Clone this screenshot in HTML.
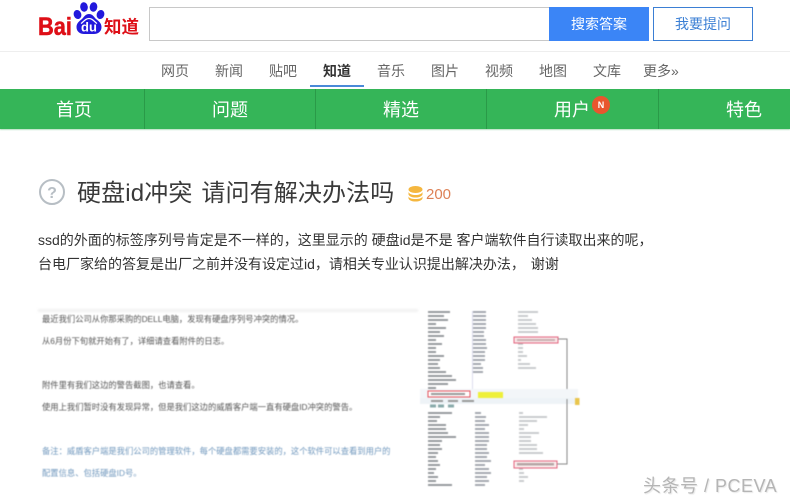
<!DOCTYPE html>
<html lang="zh"><head><meta charset="utf-8"><style>
html,body{margin:0;padding:0;background:#fff}
#p{position:relative;width:790px;height:503px;overflow:hidden;background:#fff;font-family:"Liberation Sans","Noto Sans CJK SC",sans-serif;color:#333}
#p div{position:absolute;white-space:nowrap}
.nav{top:61px;font-size:14px;line-height:20px;color:#666}
.g{top:97px;font-size:18px;line-height:26px;color:#fff;transform:translateX(-50%)}
.d{top:89px;width:1px;height:40px;background:#2a9a48}
.t{left:42px;font-size:8.3px;line-height:12px;color:#555;filter:blur(.5px)}
</style></head><body><div id="p">
<svg style="position:absolute;left:36px;top:12px" width="40" height="26"><text x="2" y="23" font-family="Liberation Sans" font-weight="700" font-size="25" textLength="34" lengthAdjust="spacingAndGlyphs" fill="#de0f17" stroke="#de0f17" stroke-width=".5">Bai</text></svg>
<svg style="position:absolute;left:72px;top:2px" width="34" height="34" viewBox="0 0 34 34">
<ellipse cx="12" cy="5" rx="3.800" ry="4.800" fill="#2319dc" transform="rotate(-8 12 5)"/>
<ellipse cx="21.500" cy="5" rx="3.800" ry="4.800" fill="#2319dc" transform="rotate(8 21.500 5)"/>
<ellipse cx="5.500" cy="12.500" rx="3.800" ry="4.600" fill="#2319dc" transform="rotate(-20 5.500 12.500)"/>
<ellipse cx="28.500" cy="12.500" rx="3.800" ry="4.600" fill="#2319dc" transform="rotate(20 28.500 12.500)"/>
<path d="M17 12c-3.500 0-5 3-7 5-2.500 2-5.500 4-5.500 8 0 5 4 7 7.500 7h10c3.500 0 7.500-2 7.500-7 0-4-3-6-5.500-8-2-2-3.500-5-7-5z" fill="#2319dc"/>
<path d="M9 21.500c2.500-1.500 4-5 8-5s5.500 3.500 8 5" fill="none" stroke="#fff" stroke-width="1.300"/>
<text x="17" y="29.500" text-anchor="middle" font-family="Liberation Sans" font-weight="700" font-size="13" fill="#fff">du</text></svg>
<div style="left:104px;top:16px;font:700 17.500px/22px 'Noto Sans CJK SC',sans-serif;color:#de0f17">知道</div>
<div style="left:149px;top:7px;width:400px;height:32px;border:1px solid #c8c8c8;border-right:0"></div>
<div style="left:549px;top:7px;width:100px;height:34px;background:#3b85f6;color:#fff;font-size:14px;line-height:34px;text-align:center">搜索答案</div>
<div style="left:653px;top:7px;width:98px;height:32px;border:1px solid #3b7fd4;color:#3b7fd4;font-size:14px;line-height:32px;text-align:center">我要提问</div>
<div style="left:0;top:51px;width:790px;height:1px;background:#eee"></div>
<div class="nav" style="left:161px">网页</div><div class="nav" style="left:215px">新闻</div><div class="nav" style="left:269px">贴吧</div>
<div class="nav" style="left:323px;color:#333;font-weight:700">知道</div><div class="nav" style="left:377px">音乐</div><div class="nav" style="left:431px">图片</div>
<div class="nav" style="left:485px">视频</div><div class="nav" style="left:539px">地图</div><div class="nav" style="left:593px">文库</div><div class="nav" style="left:643px">更多»</div>
<div style="left:310px;top:85px;width:54px;height:2px;background:#4a8ad8"></div>
<div style="left:0;top:89px;width:790px;height:40px;background:#35b558;box-shadow:0 1px 1px #b8e0c4"></div>
<div class="d" style="left:144px"></div><div class="d" style="left:315px"></div><div class="d" style="left:486px"></div><div class="d" style="left:658px"></div>
<div class="g" style="left:74px">首页</div><div class="g" style="left:230px">问题</div><div class="g" style="left:401px">精选</div><div class="g" style="left:572px">用户</div><div class="g" style="left:744px">特色</div>
<div style="left:592px;top:96px;width:18px;height:18px;border-radius:9px;background:#e8562e;color:#fff;font:700 9px/18px 'Liberation Sans',sans-serif;text-align:center">N</div>
<svg style="position:absolute;left:38px;top:178px" width="28" height="28"><circle cx="14" cy="14" r="12" fill="none" stroke="#b7bec4" stroke-width="2"/><text x="14" y="20" text-anchor="middle" font-family="Liberation Sans" font-weight="700" font-size="16" fill="#b7bec4">?</text></svg>
<div style="left:77px;top:177px;font-size:24px;line-height:34px;color:#3a3a3a;letter-spacing:.14px;word-spacing:2px">硬盘id冲突 请问有解决办法吗</div>
<svg style="position:absolute;left:408px;top:186px" width="16" height="16"><ellipse cx="7.500" cy="3.500" rx="7" ry="3.500" fill="#f5b73f"/><path d="M.5 6c1 2 3.500 3 7 3s6-1 7-3v2.500c-1 2-3.500 3-7 3s-6-1-7-3z" fill="#f5b73f"/><path d="M.5 10.500c1 2 3.500 2.500 7 2.500s6-.5 7-2.500v2c-1 2-3.500 3-7 3s-6-1-7-3z" fill="#f5b73f"/></svg>
<div style="left:426px;top:184px;font-size:15px;line-height:22px;color:#dd8156">200</div>
<div style="left:38px;top:230px;font-size:14px;line-height:20px;color:#333">ssd的外面的标签序列号肯定是不一样的，这里显示的 硬盘id是不是 客户端软件自行读取出来的呢，</div>
<div style="left:38px;top:254px;font-size:14px;line-height:20px;color:#333;word-spacing:2px">台电厂家给的答复是出厂之前并没有设定过id，请相关专业认识提出解决办法， 谢谢</div>
<div style="left:38px;top:309px;width:380px;height:3px;background:#f1f1f1;filter:blur(1px)"></div>
<div class="t" style="top:313px">最近我们公司从你那采购的DELL电脑，发现有硬盘序列号冲突的情况。</div>
<div class="t" style="top:335px">从6月份下旬就开始有了，详细请查看附件的日志。</div>
<div class="t" style="top:379px">附件里有我们这边的警告截图，也请查看。</div>
<div class="t" style="top:401px">使用上我们暂时没有发现异常，但是我们这边的威盾客户端一直有硬盘ID冲突的警告。</div>
<div class="t" style="top:445px;color:#6f97bd">备注：威盾客户端是我们公司的管理软件，每个硬盘都需要安装的，这个软件可以查看到用户的</div>
<div class="t" style="top:467px;color:#6f97bd">配置信息、包括硬盘ID号。</div>
<svg style="position:absolute;left:420px;top:305px;filter:blur(.5px)" width="170" height="195" viewBox="0 0 170 195">
<g fill="none" stroke-width="1.800">
<path stroke="#8a8f92" d="M8 7h22M8 11h16M8 15h20M8 19h8M8 23h18M8 27h12M8 31h16M8 35h8M8 39h14M8 43h8M8 47h8M8 51h16M8 55h12M8 59h10M8 63h12M8 67h18M8 71h24M8 75h28M8 79h20M8 83h8"/>
<path stroke="#9a9fa6" d="M53 7h13M53 11h13M53 15h13M53 19h13M53 23h13M53 27h11M53 31h11M53 35h13M53 39h13M53 43h14M53 47h12M53 51h12M53 55h12M53 59h8M53 63h10M53 67h10"/>
<path stroke="#c4c6c8" d="M98 7h20M98 11h10M98 15h14M98 19h18M98 23h20M98 27h20M98 39h5M98 43h5M98 47h5M98 51h9M98 55h3M98 59h12M98 63h18"/>
<path stroke="#8a8f92" d="M8 108h24M8 112h12M8 116h9M8 120h18M8 124h18M8 128h20M8 132h28M8 136h14M8 140h12M8 144h14M8 148h10M8 152h8M8 156h10M8 160h12M8 164h8M8 168h6M8 172h10M8 176h8M8 180h24"/>
<path stroke="#9a9fa6" d="M55 108h6M55 112h11M55 116h10M55 120h14M55 124h10M55 128h14M55 132h14M55 136h14M55 140h12M55 144h12M55 148h14M55 152h12M55 156h16M55 160h10M55 164h14M55 168h16M55 172h12M55 176h14M55 180h10"/>
<path stroke="#c4c6c8" d="M99 108h4M99 112h28M99 116h18M99 120h9M99 124h5M99 128h20M99 132h12M99 136h12M99 140h18M99 144h18M99 148h24M99 160h5M99 164h4M99 168h5M99 172h9M99 176h5"/>
</g>
<rect x="52" y="6" width="1" height="78" fill="#dde"/>
<rect x="94" y="32" width="44" height="6" fill="#f9e6e8" stroke="#e2627c"/><rect x="97" y="34" width="38" height="2" fill="#c9b0b0"/>
<path d="M138 34h9v60" fill="none" stroke="#888"/><path d="M147 94h8" fill="none" stroke="#888"/>
<rect x="0" y="93" width="158" height="6" fill="#eef3f7"/>
<rect x="0" y="84" width="158" height="9" fill="#f3f6f9"/>
<rect x="8" y="86" width="42" height="6" fill="#fff" stroke="#e3505a"/><rect x="11" y="88" width="34" height="2" fill="#999"/>
<rect x="58" y="87" width="25" height="6" fill="#eef03a"/>
<path d="M11 96h12M28 96h10M42 96h12" stroke="#999" stroke-width="2"/>
<rect x="155" y="93" width="4.500" height="7" fill="#e9c54d"/>
<path d="M10 101h6M18 101h6M28 101h6" stroke="#8aa" stroke-width="3"/>
<rect x="94" y="156" width="43" height="7" fill="#fbeeee" stroke="#e2627c"/><rect x="97" y="158" width="37" height="2.500" fill="#b5a5a5"/>
<path d="M137 159h10v-65" fill="none" stroke="#888"/>
</svg>
<div style="left:643px;top:474px;font-size:18px;line-height:24px;color:#b5b5b5;letter-spacing:.5px;text-shadow:1px 1px 1px #e8e8e8">头条号 / PCEVA</div>
</div></body></html>
